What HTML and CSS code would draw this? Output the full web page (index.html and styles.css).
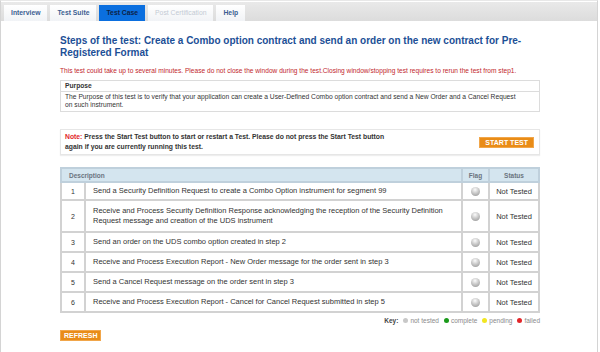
FILE: index.html
```html
<!DOCTYPE html>
<html lang="en">
<head>
    <meta charset="UTF-8">
    <meta name="viewport" content="width=device-width, initial-scale=1.0">
    <title>Test Case</title>
    <link rel="stylesheet" href="styles.css">
</head>
<body>
    <div class="frame">
        <ul class="tabs">
            <li class="tab">Interview</li>
            <li class="tab">Test Suite</li>
            <li class="tab active">Test Case</li>
            <li class="tab disabled">Post Certification</li>
            <li class="tab">Help</li>
        </ul>

        <div class="content">
            <h1>Steps of the test: Create a Combo option contract and send an order on the new contract for Pre-Registered Format</h1>
            <p class="warn">This test could take up to several minutes. Please do not close the window during the test.Closing window/stopping test requires to rerun the test from step1.</p>

            <div class="purpose">
                <div class="purpose-head">Purpose</div>
                <div class="purpose-body">The Purpose of this test is to verify that your application can create a User-Defined Combo option contract and send a New Order and a Cancel Request on such instrument.</div>
            </div>

            <div class="note">
                <p><span class="note-label">Note:</span> Press the Start Test button to start or restart a Test. Please do not press the Start Test button<br>again if you are currently running this test.</p>
                <button type="button" class="btn">START TEST</button>
            </div>

            <table class="steps">
                <thead>
                    <tr>
                        <th colspan="2" class="desc-head">Description</th>
                        <th class="flag">Flag</th>
                        <th class="status">Status</th>
                    </tr>
                </thead>
                <tbody>
                    <tr class="first">
                        <td class="num">1</td>
                        <td class="desc">Send a Security Definition Request to create a Combo Option instrument for segment 99</td>
                        <td class="flag"><span class="ball"></span></td>
                        <td class="status">Not Tested</td>
                    </tr>
                    <tr class="tall">
                        <td class="num">2</td>
                        <td class="desc">Receive and Process Security Definition Response acknowledging the reception of the Security Definition Request message and creation of the UDS instrument</td>
                        <td class="flag"><span class="ball"></span></td>
                        <td class="status">Not Tested</td>
                    </tr>
                    <tr>
                        <td class="num">3</td>
                        <td class="desc">Send an order on the UDS combo option created in step 2</td>
                        <td class="flag"><span class="ball"></span></td>
                        <td class="status">Not Tested</td>
                    </tr>
                    <tr>
                        <td class="num">4</td>
                        <td class="desc">Receive and Process Execution Report - New Order message for the order sent in step 3</td>
                        <td class="flag"><span class="ball"></span></td>
                        <td class="status">Not Tested</td>
                    </tr>
                    <tr>
                        <td class="num">5</td>
                        <td class="desc">Send a Cancel Request message on the order sent in step 3</td>
                        <td class="flag"><span class="ball"></span></td>
                        <td class="status">Not Tested</td>
                    </tr>
                    <tr>
                        <td class="num">6</td>
                        <td class="desc">Receive and Process Execution Report - Cancel for Cancel Request submitted in step 5</td>
                        <td class="flag"><span class="ball"></span></td>
                        <td class="status">Not Tested</td>
                    </tr>
                </tbody>
            </table>

            <div class="key">
                <b>Key:</b>
                <span class="key-item"><span class="dot grey"></span>not tested</span>
                <span class="key-item"><span class="dot green"></span>complete</span>
                <span class="key-item"><span class="dot yellow"></span>pending</span>
                <span class="key-item"><span class="dot red"></span>failed</span>
            </div>

            <button type="button" class="btn refresh">REFRESH</button>
        </div>
    </div>
</body>
</html>
```

FILE: styles.css
```css
body {
    margin: 0;
    font-family: "Liberation Sans", Arial, sans-serif;
    background: #fff;
}
.frame {
    width: 596px;
    height: 360px;
    border: 1px solid #d4d4d4;
    border-top-color: #e8e8e8;
}
.tabs {
    display: flex;
    align-items: flex-end;
    gap: 3px;
    list-style: none;
    margin: 1px 0 0;
    padding: 0 0 0 3px;
    height: 19px;
    background: linear-gradient(#e9e9e9, #dcdcdc);
}
.tab {
    height: 16px;
    line-height: 16px;
    padding: 0 7px;
    font-size: 6.8px;
    font-weight: bold;
    color: #3d5f92;
    background: linear-gradient(#ffffff, #f1f3f6);
}
.tab.active {
    background: #0b6fdf;
    color: #0d2247;
}
.tab.disabled {
    color: #c3cad4;
    font-weight: normal;
}
.content {
    width: 480px;
    padding-left: 59px;
}
h1 {
    margin: 14px 0 0;
    font-size: 10px;
    line-height: 12px;
    color: #1c4f96;
}
.warn {
    margin: 7px 0 0;
    font-size: 6.6px;
    line-height: 9px;
    white-space: nowrap;
    color: #c2272d;
}
.purpose {
    margin-top: 5px;
    border: 1px solid #dcdcdc;
    font-size: 6.7px;
    color: #333;
}
.purpose-head {
    padding: 1px 4px;
    line-height: 8px;
    font-weight: bold;
    border-bottom: 1px solid #dcdcdc;
}
.purpose-body {
    padding: 1px 16px 2px 4px;
    line-height: 8px;
}
.note {
    display: flex;
    align-items: center;
    justify-content: space-between;
    margin-top: 17px;
    padding: 2px 5px 2px 4px;
    border: 1px solid #e6e6e6;
    box-shadow: 0 1px 1px #eee;
}
.note p {
    margin: 0;
    font-size: 6.8px;
    line-height: 10px;
    font-weight: bold;
    color: #333;
}
.note-label {
    color: #e2262a;
}
.btn {
    border: 1px solid #f1a64a;
    background: #e98c17;
    color: #fff;
    font-family: inherit;
    font-size: 7px;
    font-weight: bold;
    line-height: 7px;
    padding: 1px 5px;
}
.steps {
    width: 480px;
    margin-top: 12px;
    border-collapse: collapse;
    font-size: 7.5px;
    color: #333;
}
.steps th,
.steps td {
    border: 2px solid #d2d2d2;
}
.steps th {
    height: 10px;
    background: #d4e5ef;
    border-color: #bfd0dc;
    color: #6b7480;
    font-size: 6.5px;
    font-weight: bold;
    text-align: center;
}
.steps th.desc-head {
    text-align: left;
    padding-left: 7px;
}
.steps td {
    height: 18px;
    padding: 0;
}
.steps .first td {
    height: 16px;
}
.steps .tall td {
    height: 30px;
}
.steps .num {
    width: 22px;
    text-align: center;
    font-size: 7px;
}
.steps .desc {
    padding: 0 7px;
    line-height: 10px;
}
.steps .flag {
    width: 23px;
    text-align: center;
}
.steps .status {
    width: 46px;
    text-align: center;
}
.ball {
    display: inline-block;
    width: 9px;
    height: 9px;
    border-radius: 50%;
    vertical-align: middle;
    background: radial-gradient(circle at 45% 30%, #fbfbfb 0, #c9c9c9 45%, #8e8e8e 100%);
}
.key {
    display: flex;
    justify-content: flex-end;
    align-items: center;
    gap: 5px;
    margin-top: 4px;
    font-size: 6.5px;
    color: #8a8a8a;
}
.key b {
    color: #444;
}
.key-item {
    display: flex;
    align-items: center;
    gap: 2px;
}
.dot {
    display: inline-block;
    width: 5px;
    height: 5px;
    border-radius: 50%;
}
.dot.grey { background: #c8c8c8; }
.dot.green { background: #1a9a1a; }
.dot.yellow { background: #f2e622; }
.dot.red { background: #e2262a; }
.refresh {
    margin-top: 4px;
    padding: 1px 3px;
}
```
